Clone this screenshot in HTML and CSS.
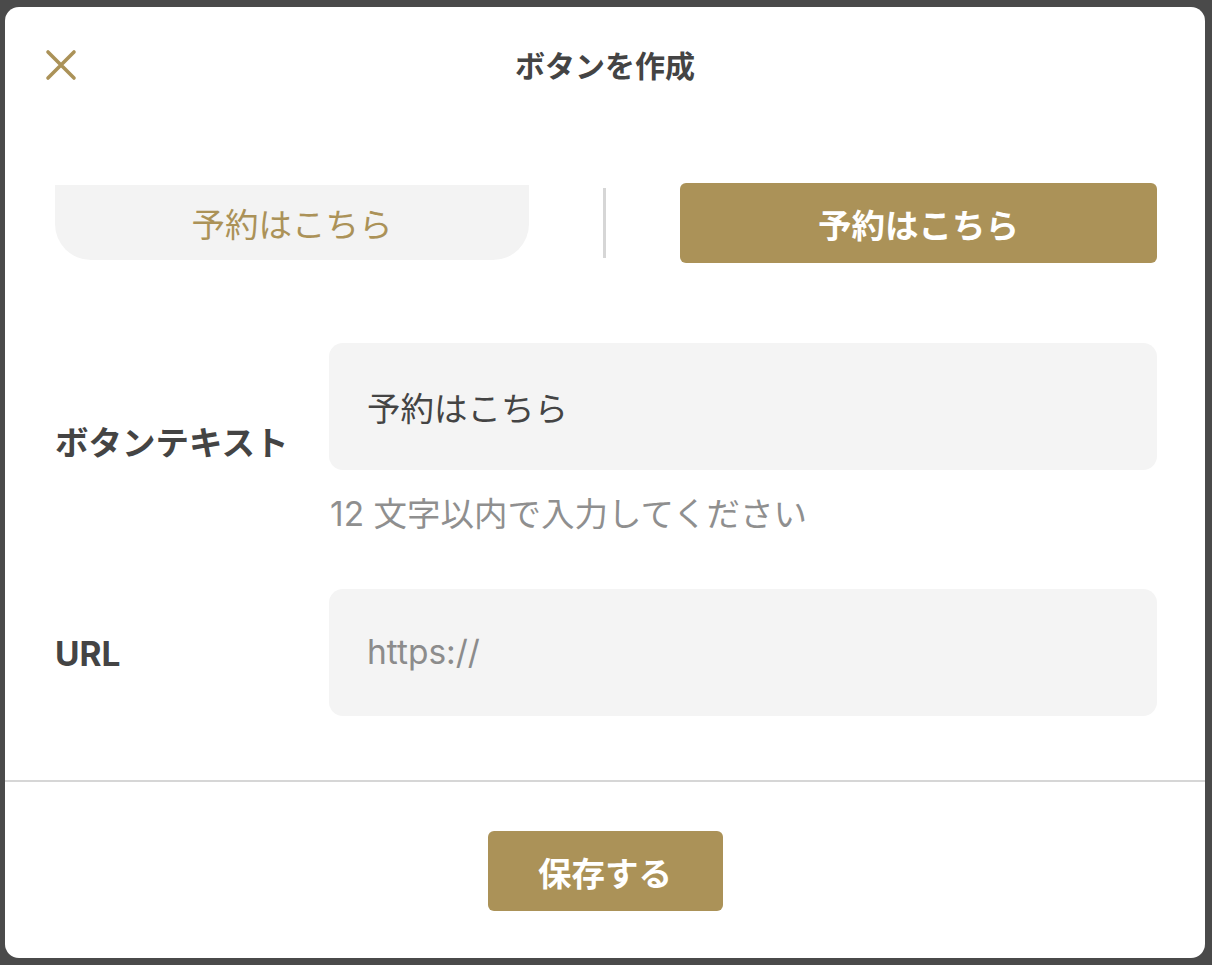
FILE: index.html
```html
<!DOCTYPE html>
<html lang="ja">

<head>
  <meta charset="UTF-8">
  <meta name="viewport" content="width=device-width, initial-scale=1.0">
  <title>ボタンを作成</title>
  <link rel="stylesheet" href="styles.css">
</head>

<body>
  <div class="modal">
    <header class="modal__header">
      <button class="modal__close" type="button" aria-label="閉じる">
        <svg width="32" height="32" viewBox="0 0 32 32" fill="none">
          <path d="M3 3L29 29M29 3L3 29" stroke="currentColor" stroke-width="3.6" stroke-linecap="round"/>
        </svg>
      </button>
      <h3 class="modal__title">ボタンを作成</h3>
    </header>

    <div class="modal__body">
      <div class="preview">
        <button class="preview__item preview__item--plain" type="button">予約はこちら</button>
        <span class="preview__divider"></span>
        <button class="preview__item preview__item--filled" type="button">予約はこちら</button>
      </div>

      <form class="form" autocomplete="off">
        <div class="form__row">
          <label class="form__label" for="label-text">ボタンテキスト</label>
          <input class="form__input" type="text" id="label-text" name="text" value="予約はこちら" maxlength="12">
        </div>
        <p class="form__hint">12 文字以内で入力してください</p>

        <div class="form__row form__row--url">
          <label class="form__label" for="url">URL</label>
          <input class="form__input" type="url" id="url" name="url" placeholder="https://">
        </div>
      </form>
    </div>

    <footer class="modal__footer">
      <button class="save-button" type="button">保存する</button>
    </footer>
  </div>
</body>

</html>
```

FILE: styles.css
```css
* {
  box-sizing: border-box;
}

body {
  margin: 0;
  padding: 7px 0 0 5px;
  min-height: 965px;
  background-color: #4a4a4a;
  font-family: "Inter", "Noto Sans CJK JP", sans-serif;
  color: #444;
  overflow: hidden;
}

button,
input {
  font-family: inherit;
  margin: 0;
}

.modal {
  width: 1200px;
  height: 951px;
  border-radius: 14px;
  background-color: #fff;
  display: flex;
  flex-direction: column;
}

.modal__header {
  height: 116px;
  display: grid;
  grid-template-columns: 1fr auto 1fr;
  align-items: center;
}

.modal__close {
  justify-self: start;
  margin-left: 40px;
  padding: 0;
  border: none;
  background: none;
  color: #ab9258;
  line-height: 0;
  cursor: pointer;
}

.modal__title {
  margin: 0 0 3px;
  font-size: 30px;
  font-weight: 700;
  color: #444;
}

.modal__body {
  flex: 1;
  padding: 60px 48px 0 50px;
}

.preview {
  display: grid;
  grid-template-columns: 474px 3px 1fr;
  gap: 74px;
  align-items: center;
  height: 80px;
}

.preview__item {
  border: none;
  font-size: 33.5px;
  cursor: pointer;
}

.preview__item--plain {
  align-self: start;
  height: 75px;
  margin-top: 2px;
  border-radius: 0 0 36px 36px;
  background-color: #f3f3f3;
  color: #ab9258;
  font-weight: 400;
}

.preview__item--filled {
  height: 80px;
  border-radius: 6px;
  background-color: #ab9258;
  color: #fff;
  font-weight: 700;
}

.preview__divider {
  height: 70px;
  background-color: #d6d6d6;
}

.form {
  margin-top: 80px;
}

.form__row {
  display: grid;
  grid-template-columns: 274px 1fr;
  align-items: center;
}

.form__row .form__label {
  margin-top: 68px;
}

.form__row--url .form__label {
  margin-top: 4px;
}

.form__label {
  font-size: 33.5px;
  font-weight: 700;
  color: #444;
}

.form__input {
  height: 127px;
  padding: 0 38px;
  border: none;
  border-radius: 14px;
  outline: none;
  background-color: #f4f4f4;
  color: #444;
  font-size: 33.5px;
}

.form__input::placeholder {
  color: #8c8c8c;
}

.form__hint {
  margin: 21px 0 51px 275px;
  font-size: 33.5px;
  line-height: 1.4;
  color: #8f8f8f;
}

.modal__footer {
  border-top: 2px solid #d6d6d6;
  padding: 49px 0 47px;
  display: flex;
  justify-content: center;
}

.save-button {
  width: 235px;
  height: 80px;
  border: none;
  border-radius: 6px;
  background-color: #ab9258;
  color: #fff;
  font-size: 33.5px;
  font-weight: 700;
  cursor: pointer;
}
```
